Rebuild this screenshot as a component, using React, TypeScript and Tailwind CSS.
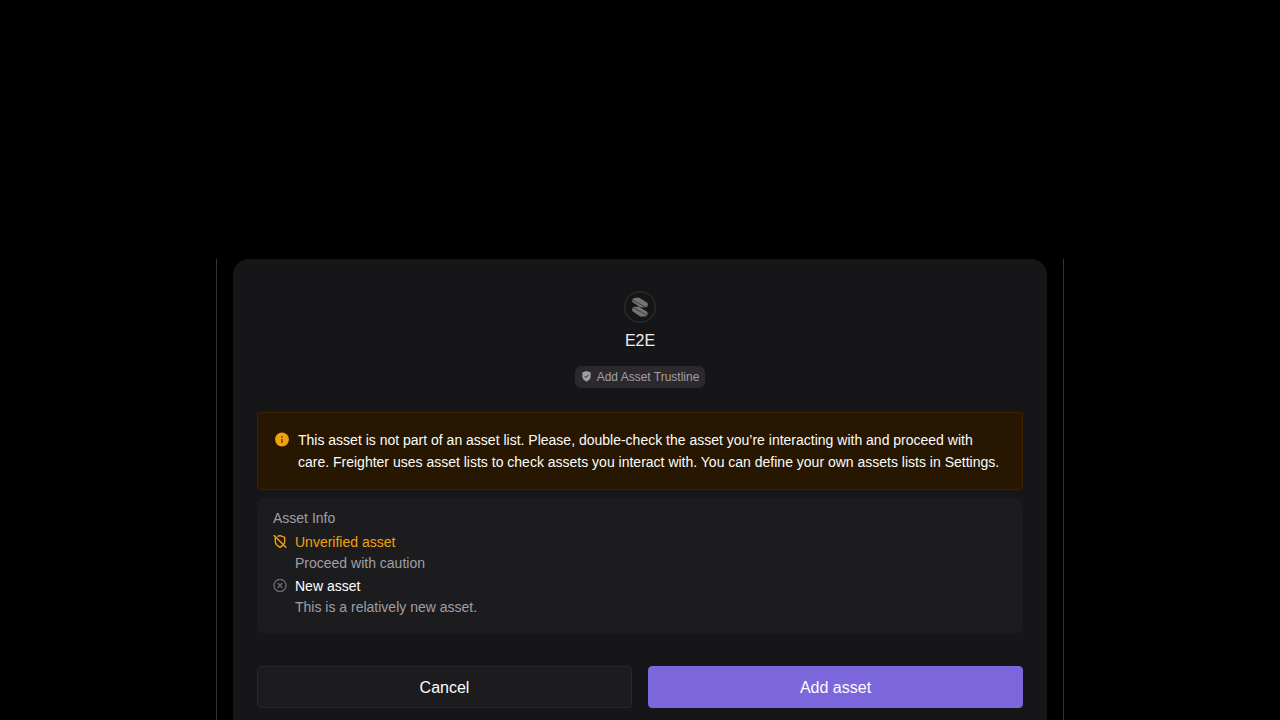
function AssetIcon() {
  return (
    <svg className="size-8" viewBox="0 0 32 32" fill="none" aria-hidden="true">
      <circle cx="16" cy="16" r="15.5" stroke="#343434" />
      <g fill="#747474" stroke="#747474" strokeWidth="3" strokeLinejoin="round">
        <path d="m11.500 8.300 3.500-.1 7.300 4.900v1.200l-1 .5h-4.500l-7-4.600v-1.100Z" />
        <path d="m10.200 17.300 4.600-.1 7.300 4.900v1.200l-1.800.8-3.600-.1-7-4.800v-1.300Z" />
      </g>
      <path d="m8.300 8.900 14.600 8M8.600 16.300l14.600 8" stroke="#2a2a2b" strokeWidth=".7" />
    </svg>
  );
}

function ShieldTickIcon() {
  return (
    <svg className="size-3 shrink-0" viewBox="0 0 12 12" fill="none" aria-hidden="true">
      <path d="M5.500 0 1.300 1.400v3.800c0 2.700 2.300 4.500 4.200 5.500 1.900-1 4.200-2.800 4.200-5.500V1.400L5.500 0Z" fill="#a09fa6" />
      <path d="m3.700 5.200 1.300 1.300 2.400-2.500" stroke="#2b292d" strokeWidth="1" strokeLinecap="round" strokeLinejoin="round" />
    </svg>
  );
}

function InfoIcon() {
  return (
    <svg className="size-4 shrink-0" viewBox="0 0 16 16" fill="none" aria-hidden="true">
      <circle cx="8" cy="7.500" r="6.900" fill="#f1a10d" />
      <path d="M8 6.900v4" stroke="#7a4e04" strokeWidth="1.700" />
      <path d="M8 4v1.700" stroke="#7a4e04" strokeWidth="1.700" />
    </svg>
  );
}

function ShieldOffIcon() {
  return (
    <svg className="size-3.5 shrink-0" viewBox="0 1 24 24" fill="none" stroke="#f1a10d" strokeWidth="2.400" strokeLinecap="round" strokeLinejoin="round" aria-hidden="true">
      <path d="M8.500 3.200 12 2l8 3v7c0 1.600-.4 3-1.100 4.200" />
      <path d="M4 5v7c0 6 8 10 8 10s2.800-1.300 5-3.500" />
      <path d="m2 2 20 20" />
    </svg>
  );
}

function XCircleIcon() {
  return (
    <svg className="size-3.5 shrink-0" viewBox="0 1 24 24" fill="none" stroke="#706f78" strokeWidth="2.200" strokeLinecap="round" strokeLinejoin="round" aria-hidden="true">
      <circle cx="12" cy="12" r="10.500" />
      <path d="m15.200 8.800-6.400 6.400M8.800 8.800l6.400 6.400" />
    </svg>
  );
}

export default function App() {
  return (
    <div className="flex min-h-screen flex-col justify-end bg-black font-['Liberation_Sans',Arial,sans-serif]">
      <main className="mx-auto w-full max-w-[848px] border-x border-[#343434] px-4">
        <section className="flex flex-col rounded-t-2xl bg-[#161618] px-6 pt-8 pb-3">
          <header className="flex flex-col items-center">
            <AssetIcon />
            <h1 className="mt-2 text-base leading-5 text-[#ededef]">E2E</h1>
            <div className="mt-[15px] flex h-[22px] items-center gap-1 rounded-md bg-[#2b292d] px-1.5 text-xs text-[#a09fa6]">
              <ShieldTickIcon />
              <span>Add Asset Trustline</span>
            </div>
          </header>

          <div role="alert" className="mt-6 flex gap-2 rounded border border-[#3f2200] bg-[#271700] p-4 text-sm leading-[22px] text-[#fcfcfc]">
            <div className="flex h-[22px] items-center">
              <InfoIcon />
            </div>
            <p>
              This asset is not part of an asset list. Please, double-check the asset you’re interacting with and proceed with care. Freighter uses asset lists to check assets you interact with. You can define your own assets lists in Settings.
            </p>
          </div>

          <section className="mt-2 rounded-lg bg-[#1c1c1f] px-4 pt-2 pb-4 text-sm text-[#a09fa6]">
            <h2 className="leading-6">Asset Info</h2>
            <div className="flex gap-2 pb-0.5">
              <div className="flex h-6 items-center">
                <ShieldOffIcon />
              </div>
              <div>
                <h3 className="leading-6 text-[#f1a10d]">Unverified asset</h3>
                <p className="leading-[18px]">Proceed with caution</p>
              </div>
            </div>
            <div className="flex gap-2 pb-0.5">
              <div className="flex h-6 items-center">
                <XCircleIcon />
              </div>
              <div>
                <h3 className="leading-6 text-white">New asset</h3>
                <p className="leading-[18px]">This is a relatively new asset.</p>
              </div>
            </div>
          </section>

          <div className="mt-8 grid grid-cols-2 gap-4">
            <button type="button" className="h-[42px] rounded border border-[#28282c] bg-[#1c1c1f] pt-0.5 text-base text-[#fcfcfc]">
              Cancel
            </button>
            <button type="button" className="h-[42px] rounded border border-[#7c66dc] bg-[#7c66dc] pt-0.5 text-base text-[#fcfcfc]">
              Add asset
            </button>
          </div>
        </section>
      </main>
    </div>
  );
}
